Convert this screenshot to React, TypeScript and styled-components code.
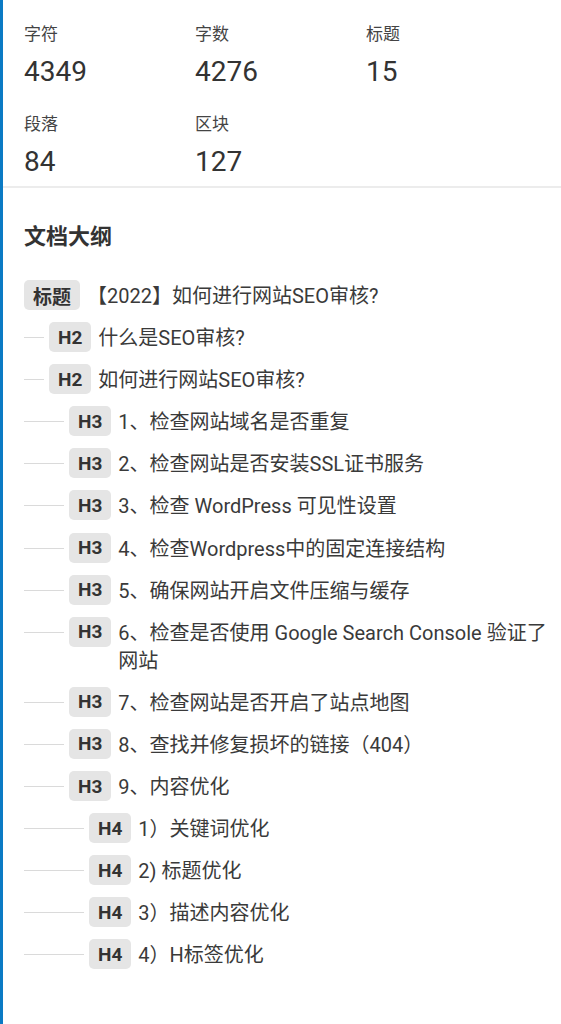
import React from 'react';
import styled, { createGlobalStyle } from 'styled-components';

const fontStack = `Roboto, "Noto Sans", "Noto Sans CJK SC", sans-serif`;

const GlobalStyle = createGlobalStyle`
  html, body {
    margin: 0;
    padding: 0;
    background: #ffffff;
  }
  body {
    font-family: ${fontStack};
    color: #333333;
  }
`;

interface Stat {
    label: string;
    value: number;
}

interface OutlineItem {
    level: number;
    text: string;
}

const stats: Stat[] = [
    { label: '字符', value: 4349 },
    { label: '字数', value: 4276 },
    { label: '标题', value: 15 },
    { label: '段落', value: 84 },
    { label: '区块', value: 127 },
];

const outline: OutlineItem[] = [
    { level: 1, text: '【2022】如何进行网站SEO审核?' },
    { level: 2, text: '什么是SEO审核?' },
    { level: 2, text: '如何进行网站SEO审核?' },
    { level: 3, text: '1、检查网站域名是否重复' },
    { level: 3, text: '2、检查网站是否安装SSL证书服务' },
    { level: 3, text: '3、检查 WordPress 可见性设置' },
    { level: 3, text: '4、检查Wordpress中的固定连接结构' },
    { level: 3, text: '5、确保网站开启文件压缩与缓存' },
    { level: 3, text: '6、检查是否使用 Google Search Console 验证了网站' },
    { level: 3, text: '7、检查网站是否开启了站点地图' },
    { level: 3, text: '8、查找并修复损坏的链接（404）' },
    { level: 3, text: '9、内容优化' },
    { level: 4, text: '1）关键词优化' },
    { level: 4, text: '2) 标题优化' },
    { level: 4, text: '3）描述内容优化' },
    { level: 4, text: '4）H标签优化' },
];

const Panel = styled.div`
  min-height: 1024px;
  box-sizing: border-box;
  border-left: 3px solid #0b7ac4;
  background: #ffffff;
`;

const StatsSection = styled.section`
  display: grid;
  grid-template-columns: repeat(3, 171px);
  row-gap: 21px;
  padding: 22px 16px 5px 21px;
  border-bottom: 2px solid #ececec;
`;

const StatItem = styled.div`
  display: flex;
  flex-direction: column;
`;

const StatLabel = styled.span`
  font-size: 17px;
  line-height: 24px;
  color: #444444;
`;

const StatValue = styled.span`
  margin-top: 7px;
  font-size: 28px;
  line-height: 38px;
  color: #333333;
`;

const OutlineSection = styled.section`
  padding: 34px 8px 0 21px;
`;

const SectionTitle = styled.h2`
  margin: 0 0 28px;
  font-size: 22px;
  line-height: 30px;
  font-weight: 700;
  color: #333333;
`;

const OutlineList = styled.ul`
  list-style: none;
  margin: 0;
  padding: 0;
  display: flex;
  flex-direction: column;
  gap: 12.1px;
`;

const OutlineRow = styled.li`
  display: flex;
  align-items: flex-start;
`;

const Connector = styled.span<{ $level: number }>`
  flex: none;
  width: ${p => (p.$level - 1) * 20}px;
  margin-right: 5px;
  height: 15px;
  border-bottom: 1px solid #dadada;
`;

const LevelBadge = styled.span`
  flex: none;
  height: 30px;
  padding: 0 9px;
  border-radius: 5px;
  background: #e5e5e5;
  display: flex;
  align-items: center;
  font-size: 19px;
  font-weight: 700;
  color: #333333;
`;

const ItemText = styled.span`
  padding-top: 2px;
  margin-left: 7px;
  font-size: 20px;
  line-height: 28px;
  color: #3a3a3a;
`;

export default function App() {
    return (
        <>
            <GlobalStyle />
            <Panel>
                <StatsSection>
                    {stats.map(stat => (
                        <StatItem key={stat.label}>
                            <StatLabel>{stat.label}</StatLabel>
                            <StatValue>{stat.value}</StatValue>
                        </StatItem>
                    ))}
                </StatsSection>

                <OutlineSection>
                    <SectionTitle>文档大纲</SectionTitle>
                    <OutlineList>
                        {outline.map((item, index) => (
                            <OutlineRow key={index}>
                                {item.level > 1 && <Connector $level={item.level} />}
                                <LevelBadge>{item.level === 1 ? '标题' : `H${item.level}`}</LevelBadge>
                                <ItemText>{item.text}</ItemText>
                            </OutlineRow>
                        ))}
                    </OutlineList>
                </OutlineSection>
            </Panel>
        </>
    );
}
